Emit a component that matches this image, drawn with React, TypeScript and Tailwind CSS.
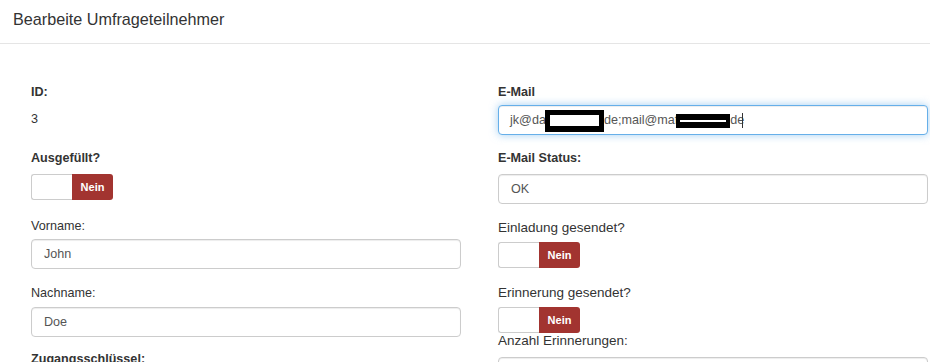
import React from "react";

const labelB = "block text-[12.6px] leading-[18px] font-bold text-[#333]";
const labelR = "block text-[12.6px] leading-[18px] font-normal text-[#333]";
const labelR2 = "block text-[13.5px] leading-[18px] font-normal text-[#333]";
const inputCls =
  "h-[30px] w-full flex items-center px-[12px] border border-[#ccc] rounded-[4px] bg-white text-[12.6px] text-[#555] shadow-[inset_0_1px_1px_rgba(0,0,0,0.075)]";

function Toggle({ className = "" }: { className?: string }) {
  return (
    <div className={"flex w-[82px] h-[26px] " + className}>
      <div className="w-[41px] h-full border border-r-0 border-[#ccc] rounded-l-[3px] bg-white" />
      <div className="w-[41px] h-full bg-[#a23430] rounded-r-[3px] flex items-center justify-center text-white font-bold text-[11px]">
        Nein
      </div>
    </div>
  );
}

export default function App() {
  return (
    <div className="w-[930px] h-[362px] overflow-hidden bg-white font-['Liberation_Sans',Arial,sans-serif] text-[#333]">
      <div className="h-[44px] border-b border-[#e5e5e5] pl-[13px] pt-[9px] text-[16.2px] leading-[20px] text-[#333]">
        Bearbeite Umfrageteilnehmer
      </div>
      <div className="flex pl-[31px] gap-[37px]">
        {/* left column */}
        <div className="w-[430px] flex flex-col pt-[39px]">
          <span className={labelB}>ID:</span>
          <span className="mt-[9px] block text-[12.6px] leading-[18px] text-[#333]">3</span>
          <span className={labelB + " mt-[21px]"}>Ausgefüllt?</span>
          <Toggle className="mt-[7px]" />
          <span className={labelR + " mt-[17px]"}>Vorname:</span>
          <div className={inputCls + " mt-[4px]"}>John</div>
          <span className={labelR + " mt-[15px]"}>Nachname:</span>
          <div className={inputCls + " mt-[5px]"}>Doe</div>
          <span className={labelB + " mt-[13px]"}>Zugangsschlüssel:</span>
        </div>
        {/* right column */}
        <div className="w-[430px] flex flex-col pt-[39px]">
          <span className={labelB}>E-Mail</span>
          <div className="mt-[4px] h-[30px] w-full flex items-center px-[11px] border border-[#66afe9] rounded-[4px] bg-white text-[12.6px] text-[#555] shadow-[inset_0_1px_1px_rgba(0,0,0,0.075),0_0_8px_rgba(102,175,233,0.6)] whitespace-nowrap">
            <span>jk@da</span>
            <span className="inline-block w-[59px] h-[22px] border-[5px] border-b-[6px] border-black bg-white -ml-[1px] mt-[1px]" />
            <span>de;mail@maf</span>
            <span className="relative inline-block w-[54px] h-[14px] bg-black -ml-[2px] mt-[1px]">
              <span className="absolute left-[4px] right-[4px] top-[6px] h-[2px] bg-white" />
            </span>
            <span>de</span>
            <span className="inline-block w-[1px] h-[15px] bg-[#333] -ml-[2px]" />
          </div>
          <span className={labelB + " mt-[14px]"}>E-Mail Status:</span>
          <div className={inputCls + " mt-[7px]"}>OK</div>
          <span className={labelR2 + " mt-[15px]"}>Einladung gesendet?</span>
          <Toggle className="mt-[5px]" />
          <span className={labelR2 + " mt-[16px]"}>Erinnerung gesendet?</span>
          <Toggle className="mt-[5px]" />
          <span className={labelR2 + " -mt-[1px]"}>Anzahl Erinnerungen:</span>
          <div className={inputCls + " mt-[7px]"}></div>
        </div>
      </div>
    </div>
  );
}
